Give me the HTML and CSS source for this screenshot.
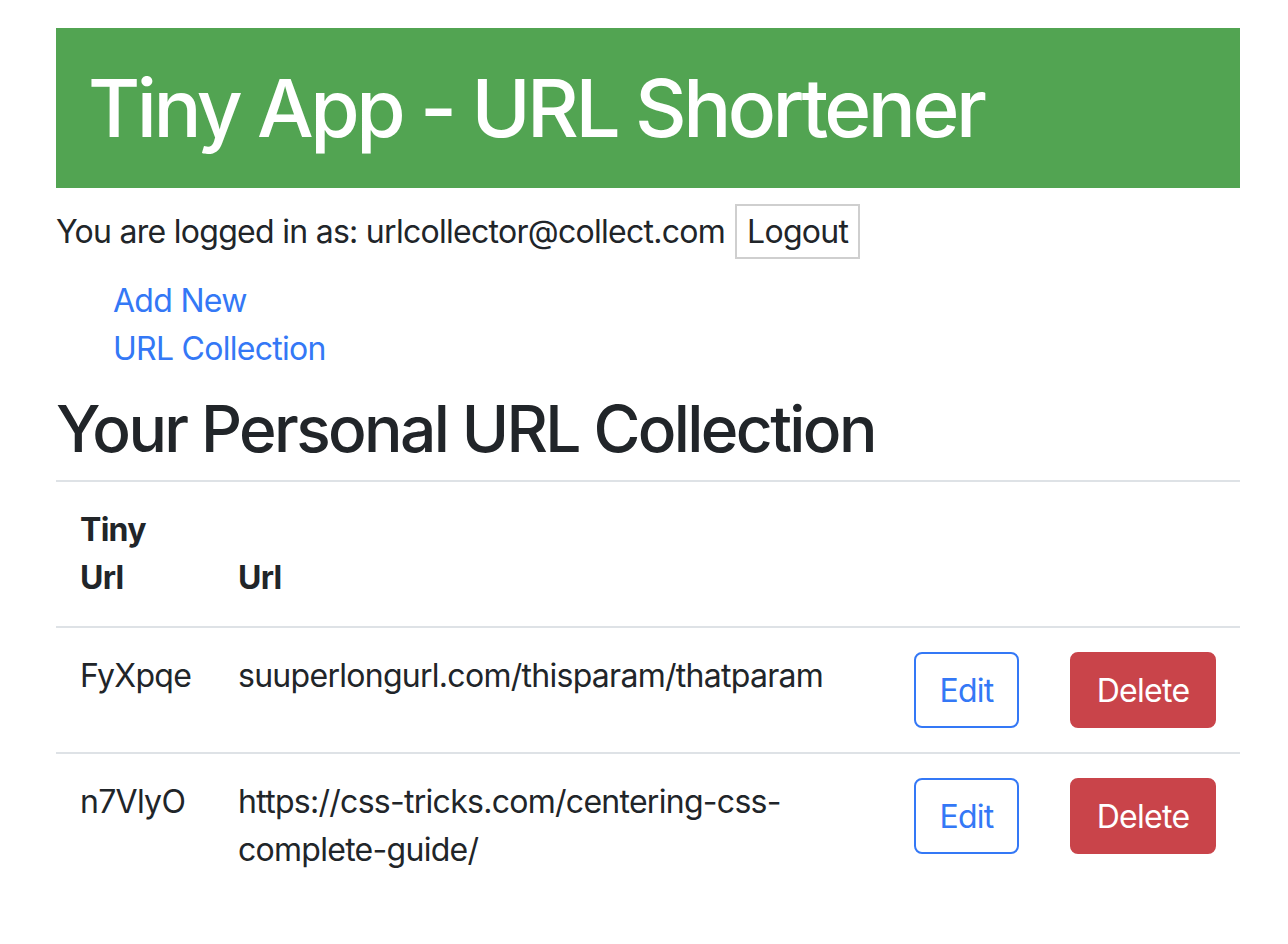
FILE: index.html
```html
<!DOCTYPE html>
<html lang="en">
<head>
<meta charset="utf-8">
<title>Tiny App</title>
<link rel="stylesheet" href="styles.css">
</head>
<body>
<div class="container">
  <header class="jumbotron">
    <h1 class="title">Tiny App - URL Shortener</h1>
  </header>
  <p class="login">You are logged in as: urlcollector@collect.com <button class="logout">Logout</button></p>
  <ul class="nav">
    <li><a href="#">Add New</a></li>
    <li><a href="#">URL Collection</a></li>
  </ul>
  <h2 class="heading">Your Personal URL Collection</h2>
  <table class="table">
    <colgroup>
      <col class="c1"><col class="c2"><col class="c3"><col class="c4">
    </colgroup>
    <thead>
      <tr><th>Tiny Url</th><th>Url</th><th></th><th></th></tr>
    </thead>
    <tbody>
      <tr>
        <td>FyXpqe</td>
        <td>suuperlongurl.com/thisparam/thatparam</td>
        <td><a class="btn btn-edit" href="#">Edit</a></td>
        <td><button class="btn btn-delete">Delete</button></td>
      </tr>
      <tr>
        <td>n7VlyO</td>
        <td>https://css-tricks.com/centering-css-complete-guide/</td>
        <td><a class="btn btn-edit" href="#">Edit</a></td>
        <td><button class="btn btn-delete">Delete</button></td>
      </tr>
    </tbody>
  </table>
</div>
</body>
</html>
```

FILE: styles.css
```css
* { box-sizing: border-box; }
html, body { margin: 0; padding: 0; background: #fff; }
body {
  font-family: Inter, "Helvetica Neue", Arial, sans-serif;
  font-size: 32px;
  line-height: 48px;
  letter-spacing: -0.72px;
  color: #212529;
}
.container {
  margin: 0 48px 0 56px;
  padding-top: 28px;
}
.jumbotron {
  background: #52a452;
  height: 160px;
  padding: 0 32px;
  display: flex;
  align-items: center;
}
.title {
  margin: 0;
  color: #fff;
  font-size: 80px;
  font-weight: 500;
  line-height: 96px;
  letter-spacing: -3.5px;
}
.login {
  margin: 16px 0 0;
  display: flex;
  align-items: center;
  gap: 10px;
}
.logout {
  font-family: inherit;
  font-size: 32px;
  line-height: 47px;
  letter-spacing: -0.72px;
  padding: 2px 10px;
  border: 2px solid #cfcfcf;
  background: #fff;
  color: #212529;
  border-radius: 0;
}
.nav {
  list-style: none;
  margin: 18px 0 0;
  padding: 0 0 0 57px;
}
.nav a {
  color: #3478f6;
  text-decoration: none;
}
.heading {
  margin: 18px 0 12px;
  font-size: 64px;
  font-weight: 500;
  line-height: 76.8px;
  letter-spacing: -2.6px;
}
.table {
  width: 100%;
  table-layout: fixed;
  border-collapse: collapse;
  border-top: 2px solid #dee2e6;
}
.c1 { width: 158px; }
.c2 { width: 676px; }
.c3 { width: 156px; }
.c4 { width: 194px; }
.table th, .table td {
  padding: 24px;
  text-align: left;
  vertical-align: top;
}
.table th { font-weight: 700; vertical-align: bottom; }
.table thead tr { border-bottom: 2px solid #dee2e6; }
.table tbody tr + tr { border-top: 2px solid #dee2e6; }
.btn {
  display: inline-block;
  font-family: inherit;
  font-size: 32px;
  line-height: 48px;
  letter-spacing: -0.72px;
  padding: 13px 0 11px;
  border: 2px solid transparent;
  border-radius: 8px;
  text-decoration: none;
  text-align: center;
}
.btn-edit {
  color: #3478f6;
  border-color: #3478f6;
  background: #fff;
  width: 105px;
}
.btn-delete {
  color: #fff;
  background: #c9444a;
  border-color: #c9444a;
  width: 146px;
}
```
